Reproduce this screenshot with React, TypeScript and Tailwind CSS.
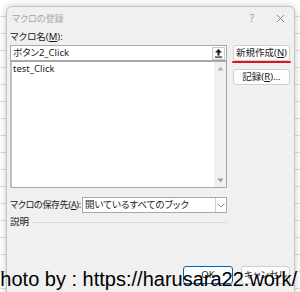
import React from 'react';

const jp = "font-['Noto_Sans','Noto_Sans_CJK_JP',sans-serif] [font-feature-settings:'palt']";

function UploadIcon() {
  return (
    <svg width="9" height="10" viewBox="0 0 9 10">
      <path d="M4.5 1 L8 4.5 L5.5 4.5 L5.5 7.5 L3.5 7.5 L3.5 4.5 L1 4.5 Z" fill="#1a1a1a" />
      <rect x="1" y="8.5" width="7" height="1.2" fill="#1a1a1a" />
    </svg>
  );
}

function Chevron() {
  return (
    <svg width="8" height="5" viewBox="0 0 8 5">
      <path d="M0.5 0.5 L4 4 L7.5 0.5" fill="none" stroke="#888" strokeWidth="1" />
    </svg>
  );
}

function Btn({ children, className = '' }: { children: React.ReactNode; className?: string }) {
  return (
    <div
      className={`h-[16px] flex items-center justify-center bg-[#fdfdfd] border border-[#d0d0d0] rounded-[3px] text-[9.5px] text-[#1a1a1a] ${className}`}
    >
      {children}
    </div>
  );
}

export default function App() {
  return (
    <div
      className={`relative w-[300px] h-[292px] overflow-hidden bg-white bg-[repeating-linear-gradient(to_bottom,transparent_0,transparent_16px,#dcdcdc_16px,#dcdcdc_17px)] pt-[6px] pl-[6px] ${jp}`}
    >
      <div className="w-[289px] h-[300px] bg-[#f0f0f0] border border-[#c4c4c4] rounded-t-[6px] shadow-[0_0_7px_rgba(0,0,0,0.22)] flex flex-col">
        {/* title bar */}
        <div className="h-[23px] flex items-center justify-between pl-[5px] pr-[9px]">
          <span className="text-[9px] text-[#a6a6a6]">マクロの登録</span>
          <div className="flex items-center gap-[22px] text-[#9a9a9a]">
            <span className="text-[10px]">?</span>
            <svg width="9" height="9" viewBox="0 0 9 9">
              <path d="M1 1 L8 8 M8 1 L1 8" stroke="#8a8a8a" strokeWidth="1" />
            </svg>
          </div>
        </div>

        <div className="px-[3px] flex flex-col">
          <div className="h-[14px] flex items-center text-[9.5px] text-[#1a1a1a]">
            マクロ名(<span className="underline">M</span>):
          </div>

          <div className="mt-[1px] flex">
            <div className="w-[217px] flex flex-col">
              <div className="h-[16px] bg-white border border-[#a8a8a8] flex items-center justify-between pl-[2px] pr-[1px]">
                <span className="text-[9.5px] text-[#1a1a1a]">ボタン2_Click</span>
                <div className="w-[13px] h-[13px] border border-[#c8c8c8] bg-[#fafafa] flex items-center justify-center">
                  <UploadIcon />
                </div>
              </div>
              <div className="h-[127px] bg-white border border-[#a8a8a8] border-l-[2px] border-l-[#c0c0c0] flex">
                <div className="flex-1 pl-[1px] pt-[1px] text-[9.5px] text-[#1a1a1a] leading-[12px]">test_Click</div>
                <div className="w-[12px] bg-[#f0f0f0] flex flex-col items-center justify-between py-[4px]">
                  <svg width="7" height="5" viewBox="0 0 7 5">
                    <path d="M3.5 0.5 L6.5 4.5 L0.5 4.5 Z" fill="#b0b0b0" />
                  </svg>
                  <svg width="7" height="5" viewBox="0 0 7 5">
                    <path d="M0.5 0.5 L6.5 0.5 L3.5 4.5 Z" fill="#a0a0a0" />
                  </svg>
                </div>
              </div>
            </div>

            <div className="ml-[6px] w-[57px] flex flex-col">
              <Btn>
                新規作成(<span className="underline">N</span>)
              </Btn>
              <div className="h-[2px] -mx-[1px] bg-[#e0141e] rounded-full" />
              <Btn className="mt-[6px]">
                記録(<span className="underline">R</span>)...
              </Btn>
            </div>
          </div>

          <div className="mt-[9px] w-[217px] flex items-center">
            <span className="w-[72px] shrink-0 whitespace-nowrap text-[9px] tracking-[-0.3px] text-[#1a1a1a]">
              マクロの保存先(<span className="underline">A</span>):
            </span>
            <div className="flex-1 h-[16px] bg-white border border-[#a8a8a8] flex items-center">
              <span className="flex-1 pl-[2px] text-[9.5px] text-[#1a1a1a] whitespace-nowrap overflow-hidden">
                開いているすべてのブック
              </span>
              <div className="w-[11px] h-full border-l border-[#d0d0d0] flex items-center justify-center">
                <Chevron />
              </div>
            </div>
          </div>

          <div className="mt-[2px] w-[217px] h-[14px] flex items-center gap-[3px]">
            <span className="text-[9.5px] text-[#1a1a1a]">説明</span>
            <div className="flex-1 h-px bg-[#d8d8d8]" />
          </div>

          <div className="mt-[37px] flex justify-end gap-[8px] pr-[1px]">
            <div className="w-[50px] h-[18px] bg-[#fdfdfd] border border-[#0067c0] rounded-[3px] flex items-center justify-center text-[9.5px] text-[#1a1a1a]">
              OK
            </div>
            <div className="w-[49px] h-[18px] bg-[#fdfdfd] border border-[#d0d0d0] rounded-[3px] flex items-center justify-center text-[9.5px] text-[#1a1a1a]">
              キャンセル
            </div>
          </div>
        </div>
      </div>

      <div className="absolute left-[-13px] top-[269px] whitespace-nowrap font-['Liberation_Sans',Arial,sans-serif] text-[20px] leading-[20px] text-black">
        Photo by : https://harusara22.work/
      </div>
    </div>
  );
}
